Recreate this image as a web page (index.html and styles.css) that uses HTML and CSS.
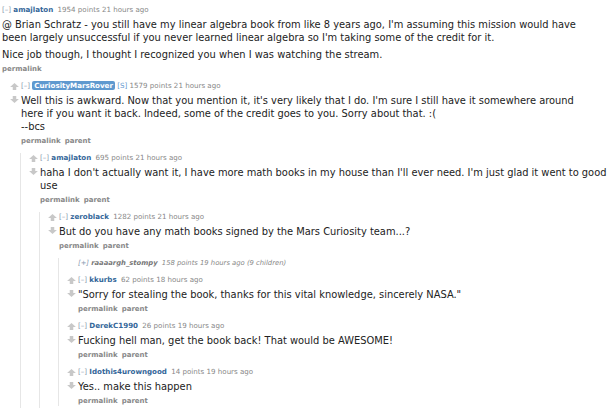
FILE: index.html
```html
<!DOCTYPE html>
<html>
<head>
<meta charset="utf-8">
<link rel="stylesheet" href="styles.css">
</head>
<body>
<div class="thread">
  <div class="comment root">
    <div class="entry">
      <p class="tagline"><span class="expand">[–]</span> <span class="author">amajlaton</span> <span class="meta">1954 points 21 hours ago</span></p>
      <div class="md">
        <p>@ Brian Schratz - you still have my linear algebra book from like 8 years ago, I'm assuming this mission would have been largely unsuccessful if you never learned linear algebra so I'm taking some of the credit for it.</p>
        <p>Nice job though, I thought I recognized you when I was watching the stream.</p>
      </div>
      <p class="buttons"><span>permalink</span></p>

      <div class="child first">
        <div class="comment">
          <div class="midcol"><svg class="arrow" viewBox="0 0 10 8"><path d="M5 0L10 4.5H7V8H3V4.5H0Z"/></svg><svg class="arrow down" viewBox="0 0 10 8"><path d="M5 8L10 3.5H7V0H3V3.5H0Z"/></svg></div>
          <div class="entry">
            <p class="tagline"><span class="expand">[–]</span> <span class="author submitter">CuriosityMarsRover</span> <span class="flag">[S]</span> <span class="meta">1579 points 21 hours ago</span></p>
            <div class="md">
              <p>Well this is awkward. Now that you mention it, it's very likely that I do. I'm sure I still have it somewhere around here if you want it back. Indeed, some of the credit goes to you. Sorry about that. :(<br>--bcs</p>
            </div>
            <p class="buttons"><span>permalink</span><span>parent</span></p>

            <div class="child">
              <div class="comment">
                <div class="midcol"><svg class="arrow" viewBox="0 0 10 8"><path d="M5 0L10 4.5H7V8H3V4.5H0Z"/></svg><svg class="arrow down" viewBox="0 0 10 8"><path d="M5 8L10 3.5H7V0H3V3.5H0Z"/></svg></div>
                <div class="entry">
                  <p class="tagline"><span class="expand">[–]</span> <span class="author">amajlaton</span> <span class="meta">695 points 21 hours ago</span></p>
                  <div class="md">
                    <p>haha I don't actually want it, I have more math books in my house than I'll ever need. I'm just glad it went to good use</p>
                  </div>
                  <p class="buttons"><span>permalink</span><span>parent</span></p>

                  <div class="child">
                    <div class="comment">
                      <div class="midcol"><svg class="arrow" viewBox="0 0 10 8"><path d="M5 0L10 4.5H7V8H3V4.5H0Z"/></svg><svg class="arrow down" viewBox="0 0 10 8"><path d="M5 8L10 3.5H7V0H3V3.5H0Z"/></svg></div>
                      <div class="entry">
                        <p class="tagline"><span class="expand">[–]</span> <span class="author">zeroblack</span> <span class="meta">1282 points 21 hours ago</span></p>
                        <div class="md">
                          <p>But do you have any math books signed by the Mars Curiosity team...?</p>
                        </div>
                        <p class="buttons"><span>permalink</span><span>parent</span></p>

                        <div class="child">
                          <div class="comment collapsed">
                            <div class="midcol"></div>
                            <div class="entry">
                              <p class="tagline"><span class="expand">[+]</span> <span class="author">raaaargh_stompy</span> <span class="meta">158 points 19 hours ago</span> <span class="meta">(9 children)</span></p>
                            </div>
                          </div>
                          <div class="comment">
                            <div class="midcol"><svg class="arrow" viewBox="0 0 10 8"><path d="M5 0L10 4.5H7V8H3V4.5H0Z"/></svg><svg class="arrow down" viewBox="0 0 10 8"><path d="M5 8L10 3.5H7V0H3V3.5H0Z"/></svg></div>
                            <div class="entry">
                              <p class="tagline"><span class="expand">[–]</span> <span class="author">kkurbs</span> <span class="meta">62 points 18 hours ago</span></p>
                              <div class="md"><p>"Sorry for stealing the book, thanks for this vital knowledge, sincerely NASA."</p></div>
                              <p class="buttons"><span>permalink</span><span>parent</span></p>
                            </div>
                          </div>
                          <div class="comment">
                            <div class="midcol"><svg class="arrow" viewBox="0 0 10 8"><path d="M5 0L10 4.5H7V8H3V4.5H0Z"/></svg><svg class="arrow down" viewBox="0 0 10 8"><path d="M5 8L10 3.5H7V0H3V3.5H0Z"/></svg></div>
                            <div class="entry">
                              <p class="tagline"><span class="expand">[–]</span> <span class="author">DerekC1990</span> <span class="meta">26 points 19 hours ago</span></p>
                              <div class="md"><p>Fucking hell man, get the book back! That would be AWESOME!</p></div>
                              <p class="buttons"><span>permalink</span><span>parent</span></p>
                            </div>
                          </div>
                          <div class="comment">
                            <div class="midcol"><svg class="arrow" viewBox="0 0 10 8"><path d="M5 0L10 4.5H7V8H3V4.5H0Z"/></svg><svg class="arrow down" viewBox="0 0 10 8"><path d="M5 8L10 3.5H7V0H3V3.5H0Z"/></svg></div>
                            <div class="entry">
                              <p class="tagline"><span class="expand">[–]</span> <span class="author">Idothis4urowngood</span> <span class="meta">14 points 19 hours ago</span></p>
                              <div class="md"><p>Yes.. make this happen</p></div>
                              <p class="buttons"><span>permalink</span><span>parent</span></p>
                            </div>
                          </div>
                        </div>
                      </div>
                    </div>
                  </div>
                </div>
              </div>
            </div>
          </div>
        </div>
      </div>
    </div>
  </div>
</div>
</body>
</html>
```
FILE: styles.css
```css
html, body {
  margin: 0;
  padding: 0;
  background: #fff;
  overflow: hidden;
}
body {
  font-family: "DejaVu Sans", Verdana, sans-serif;
  color: #222;
}
.thread {
  padding: 5px 0 0 2px;
}
p {
  margin: 0;
}
.comment {
  display: flex;
  align-items: flex-start;
  margin-bottom: 7px;
}
.entry {
  flex: 1;
  min-width: 0;
}
.midcol {
  width: 19px;
  flex: none;
  display: flex;
  flex-direction: column;
  align-items: flex-start;
  padding-left: 8px;
  box-sizing: border-box;
  padding-top: 2px;
}
.arrow {
  width: 9px;
  height: 7px;
  fill: #c8c8c8;
  display: block;
}
.arrow.down {
  margin-top: 6px;
}
.tagline {
  font-size: 7.1px;
  line-height: 10px;
  color: #888;
  margin-bottom: 3px;
  white-space: nowrap;
}
.expand {
  color: #8a9bb0;
}
.author {
  color: #369;
  font-weight: bold;
  margin-right: 2px;
}
.author.submitter {
  background: #5f99cf;
  color: #fff;
  padding: 0 2px;
  border-radius: 2px;
  margin-right: 0;
}
.flag {
  color: #5f99cf;
}
.meta {
  color: #888;
}
.md {
  font-size: 9.9px;
  line-height: 13px;
  color: #222;
  max-width: 578px;
}
.md p + p {
  margin-top: 4px;
}
.buttons {
  font-size: 7px;
  line-height: 10px;
  font-weight: bold;
  color: #888;
  margin-top: 3px;
}
.buttons span {
  margin-right: 4px;
}
.child {
  border-left: 1px solid #e6e6e6;
  margin-left: -1px;
  margin-top: 7px;
}
.child.first {
  border-left-color: transparent;
}
.collapsed .midcol {
  padding-top: 0;
}
.collapsed .tagline {
  font-style: italic;
  margin-bottom: 0;
  font-size: 6.8px;
}
.collapsed .author {
  color: #777;
}
```
